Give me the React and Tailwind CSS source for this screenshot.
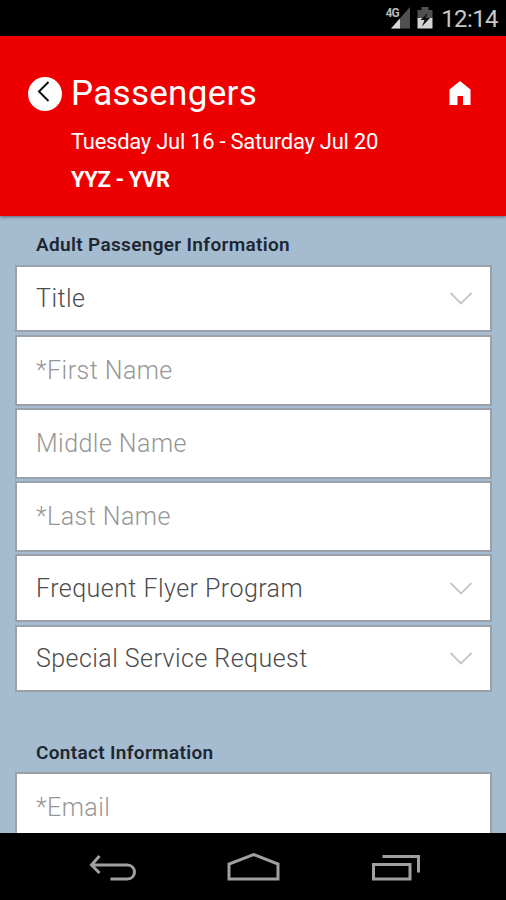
import clsx from 'clsx';

const fields = [
	{ label: 'Title', type: 'select', size: 'h-[67px] mb-[3px]' },
	{ label: '*First Name', type: 'input', size: 'h-[71px] mb-[2px]' },
	{ label: 'Middle Name', type: 'input', size: 'h-[71px] mb-[2px]' },
	{ label: '*Last Name', type: 'input', size: 'h-[71px] mb-[2px]' },
	{ label: 'Frequent Flyer Program', type: 'select', size: 'h-[68px] mb-[3px] pt-px' },
	{ label: 'Special Service Request', type: 'select', size: 'h-[67px]' },
];

const StatusBar = () => (
	<div className="flex h-9 shrink-0 items-center justify-end bg-black pr-2 text-[#c8c8c8]">
		<svg width="26" height="24" viewBox="0 0 26 24" className="mr-[6px]">
			<path d="M6 22.500L25 1V22.500Z" fill="#505050" />
			<path d="M6 22.500L15 12.500V22.500Z" fill="#d8d8d8" />
			<rect x="0" y="0" width="14" height="12" fill="#000" />
			<text x="0.500" y="11" fontSize="12" fontWeight="700" letterSpacing="-1" fill="#b8b8b8" fontFamily="Roboto, sans-serif">4G</text>
		</svg>
		<svg width="16" height="24" viewBox="0 0 16 24" className="mr-2">
			<path d="M4.500 1h7v3H15.500v8H.500V4h4z" fill="#505050" />
			<path d="M.500 12h15v10.500H.500z" fill="#d4d4d4" />
			<path d="M10.500 7L3.500 14h4L5 20.500L13 12H9z" fill="#111" />
		</svg>
		<span className="pt-0.5 text-[24px] leading-9 tracking-[-0.6px]">12:14</span>
	</div>
);

const Header = () => (
	<header className="relative z-10 h-[180px] shrink-0 bg-[#ef0000] pt-[34px] pl-7 text-white shadow-[0_1px_3px_rgba(60,60,80,0.7)]">
		<div className="flex h-12 items-center">
			<button className="flex size-[34px] items-center justify-center rounded-full bg-white">
				<svg width="34" height="34" viewBox="0 0 34 34">
					<path d="M20.500 5L11 14.500L20.500 24" fill="none" stroke="#111" strokeWidth="2" />
				</svg>
			</button>
			<h1 className="ml-[9px] flex-1 text-[35px] leading-12 tracking-[0.3px]">Passengers</h1>
			<svg width="22" height="24" viewBox="0 0 22 24" className="mr-[35px] -mt-0.5">
				<path d="M11 0L21.500 8.500V24H14V15H8.500V24H.500V8.500Z" fill="#fff" />
			</svg>
		</div>
		<p className="mt-[9px] pl-[43px] text-[22px] leading-[30px] tracking-[-0.27px]">Tuesday Jul 16 - Saturday Jul 20</p>
		<p className="mt-2 pl-[43px] text-[22px] leading-[30px] font-bold tracking-[-0.45px]">YYZ - YVR</p>
	</header>
);

const Field = ({ label, type, size }) => (
	<div
		className={clsx(
			'flex items-center justify-between border-2 border-[#9aa1a9] bg-white pr-[17px] pl-[19px] text-[25px] font-light tracking-[0.45px]',
			type === 'select' ? 'text-[#4c4c4c]' : 'text-[#969696]',
			size
		)}
	>
		<span>{label}</span>
		{type === 'select' && (
			<svg width="24" height="14" viewBox="0 0 24 14">
				<path d="M1.500 1L12 11.500L22.500 1" fill="none" stroke="#c6c6c6" strokeWidth="1.800" />
			</svg>
		)}
	</div>
);

const NavBar = () => (
	<nav className="relative z-10 flex h-[67px] shrink-0 items-center bg-black pt-0.5 pl-[88px]">
		<svg width="334" height="32" viewBox="0 0 334 32" fill="none" stroke="#a0a0a0" strokeWidth="3">
			<path d="M11.500 4L3.500 13L11.500 21M3.500 13H39C49 13 49 27 39 27H22.500" />
			<path d="M141 27V12L165.500 2.500L190 12V27Z" />
			<path d="M285.500 12.500H322V27H285.500Z" />
			<path d="M294.500 4.500H330.500V20.500" />
		</svg>
	</nav>
);

export default function App() {
	return (
		<div className="flex h-[900px] w-[506px] flex-col overflow-hidden bg-[#a5bbd0] font-['Roboto',sans-serif]">
			<StatusBar />
			<Header />
			<main className="h-[617px] shrink-0 overflow-hidden pr-[14px] pl-[15px]">
				<h2 className="h-[49px] pt-[14px] pl-[21px] text-[19px] leading-[30px] font-semibold tracking-[0.33px] text-[#1d2731]">
					Adult Passenger Information
				</h2>
				{fields.map((field) => (
					<Field key={field.label} {...field} />
				))}
				<h2 className="mt-[43px] h-[37px] pt-[3px] pl-[21px] text-[19px] leading-[30px] font-semibold tracking-[0.33px] text-[#1d2731]">
					Contact Information
				</h2>
				<Field label="*Email" type="input" size="h-[71px]" />
			</main>
			<NavBar />
		</div>
	);
}
